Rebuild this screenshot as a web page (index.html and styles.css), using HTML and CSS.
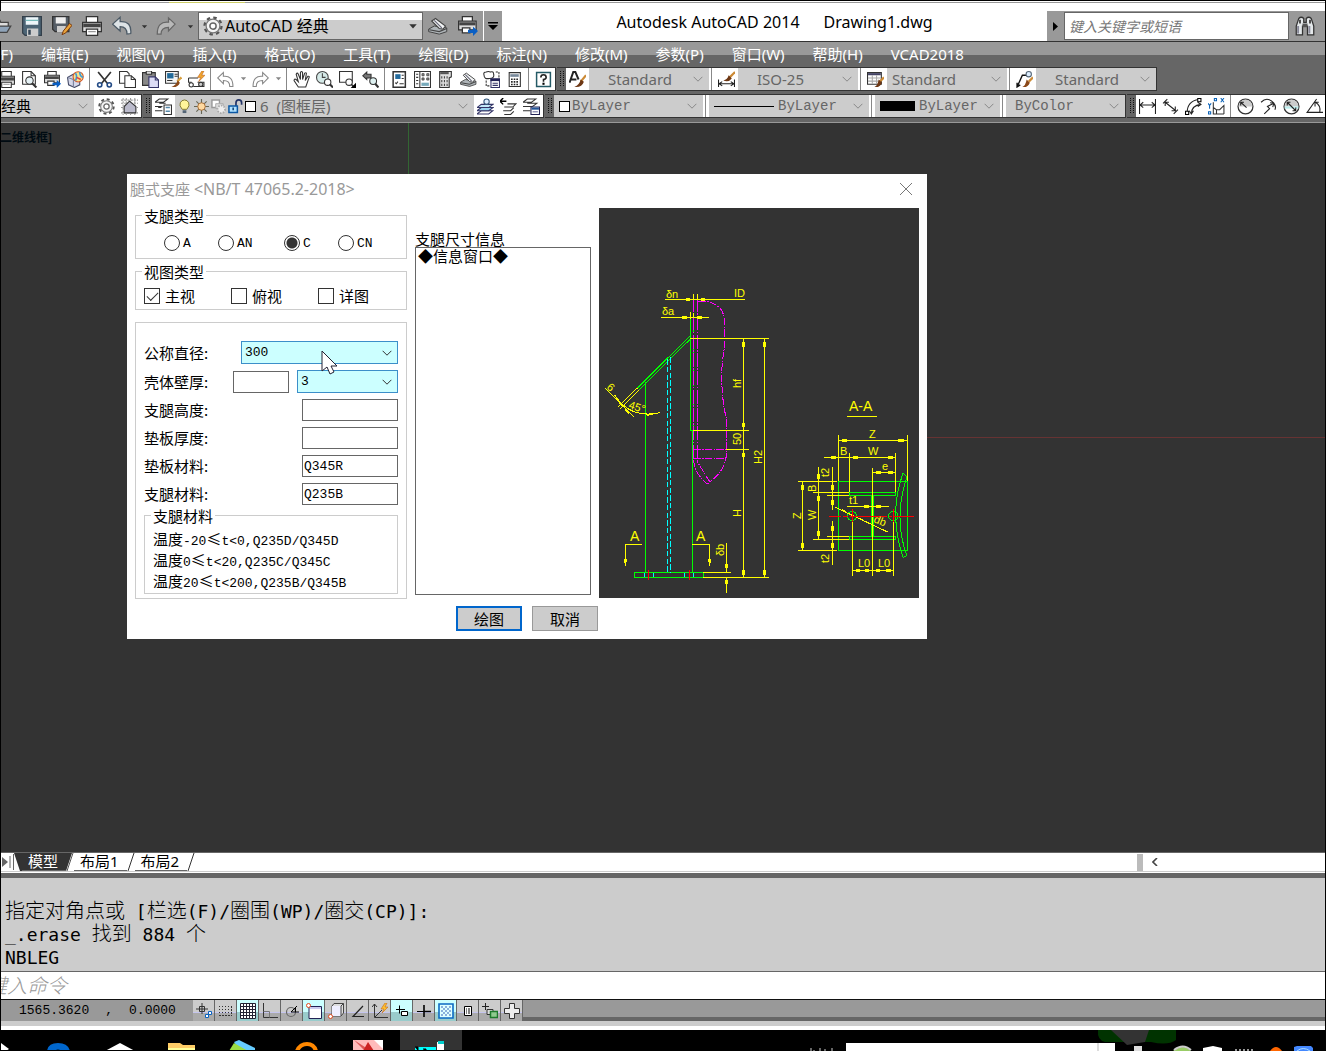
FILE: index.html
```html
<!DOCTYPE html>
<html lang="zh-CN">
<head>
<meta charset="utf-8">
<title>Autodesk AutoCAD 2014 - Drawing1.dwg</title>
<link rel="stylesheet" href="styles.css">
</head>
<body>
<svg class="defs" aria-hidden="true">
  <symbol id="open" viewBox="0 0 16 16"><path d="M1 13V3h5l1 2h6v3" fill="#ddd" stroke="#444"/><path d="M1 13l3-5h11l-3 5z" fill="#8fa3b8" stroke="#444"/></symbol>
  <symbol id="save" viewBox="0 0 16 16"><path d="M.5.5h15v15h-13l-2-2z" fill="#4c6475" stroke="#333f4a"/><path d="M3 1h10v6H3z" fill="#eef6fa"/><path d="M3 3.5h10" stroke="#7bb"/><path d="M4 10h9v6H4z" fill="#ccc"/><path d="M5 11h2v4H5z" fill="#345"/></symbol>
  <symbol id="saveas" viewBox="0 0 16 16"><path d="M.5.5h13v12h-11l-2-2z" fill="#555d66" stroke="#333"/><path d="M3 1h8v5H3z" fill="#eee"/><path d="M4 8h7v5H4z" fill="#ccc"/><path d="M8 15l1-3 5-6 2 1.500-5 6z" fill="#e8a33a" stroke="#7a3c12" stroke-width=".8"/></symbol>
  <symbol id="print" viewBox="0 0 16 16"><path d="M3.500 5V.5h9V5" fill="#fff" stroke="#333"/><path d="M.5 5h15v7.500H.5z" fill="#ddd" stroke="#333"/><path d="M1 6h14v3H1z" fill="#444"/><path d="M3.500 10.500h9v5h-9z" fill="#fff" stroke="#333"/><path d="M5 12.500h6" stroke="#999"/></symbol>
  <symbol id="plot" viewBox="0 0 16 16"><path d="M3.500 4V.5h8V4" fill="#fff" stroke="#333"/><path d="M.5 4h14v7H.5z" fill="#ddd" stroke="#333"/><path d="M1 5h13v2.500H1z" fill="#444"/><path d="M3.500 9.500h6v4h-6z" fill="#fff" stroke="#333"/><path d="M8 11h4V8.500L16 12l-4 4v-2.500H8z" fill="#0a5fc4"/></symbol>
  <symbol id="preview" viewBox="0 0 16 16"><path d="M1.500 12.500V.5h8l4 4v8z" fill="#fff" stroke="#333"/><path d="M9.500.5v4h4" fill="none" stroke="#333"/><circle cx="8" cy="9" r="3.500" fill="#e6f2f6" stroke="#333"/><path d="M10.500 11.500l4 4" stroke="#333" stroke-width="2"/></symbol>
  <symbol id="globe" viewBox="0 0 16 16"><path d="M.5 6L6 3l6 3v7l-5 2.500L1.500 13z" fill="#d5d8ea" stroke="#444a66"/><path d="M6 8v7M.5 6L6 8" stroke="#777d99" fill="none"/><circle cx="10.500" cy="5.500" r="4.800" fill="#fbe48a" stroke="#d0562a"/><path d="M8 2q2 3 0 7M12 1q0 4 3 5" fill="none" stroke="#3a9ad9" stroke-width="1.500"/><path d="M9 6l4 2" stroke="#d44" stroke-width="1.500"/></symbol>
  <symbol id="cut" viewBox="0 0 16 16"><path d="M2 1l9 11M14 1L5 12" stroke="#333" stroke-width="1.600"/><circle cx="3.500" cy="13" r="2" fill="none" stroke="#224a85" stroke-width="1.500"/><circle cx="12.500" cy="13" r="2" fill="none" stroke="#224a85" stroke-width="1.500"/></symbol>
  <symbol id="copy" viewBox="0 0 16 16"><path d="M.5.5h7l2 2v9h-9z" fill="#fff" stroke="#333"/><path d="M5.500 4.500h6l4 3.500v7.500h-10z" fill="#fff" stroke="#333"/><path d="M11.500 4.500V8h4" fill="none" stroke="#333"/></symbol>
  <symbol id="paste" viewBox="0 0 16 16"><path d="M.5 1.500h12v12H.5z" fill="#888" stroke="#333"/><path d="M4 0h5v3H4z" fill="#ddd" stroke="#333"/><path d="M6.500 5.500h6l3 3v7h-9z" fill="#dcdcf5" stroke="#336"/><path d="M12.500 5.500v3h3" fill="none" stroke="#336"/></symbol>
  <symbol id="match" viewBox="0 0 16 16"><path d="M.5.5h12v11H.5z" fill="#f4f4f4" stroke="#333"/><path d="M2 2h6v5H2z" fill="#226a9a"/><path d="M9 3h3M9 5h3M2 9h5" stroke="#333"/><path d="M15.500 6l-4 4" stroke="#d8a040" stroke-width="2"/><path d="M12 9l2 2q-2 5-8 4 4-1 6-6z" fill="#8a4818"/></symbol>
  <symbol id="bedit" viewBox="0 0 16 16"><path d="M.5 6.500h9M.5 6.500v4h3M9 10.500h6v4H5" fill="none" stroke="#333"/><circle cx="3" cy="13" r="2" fill="#fff" stroke="#333"/><circle cx="12" cy="12.500" r="2" fill="#ccc" stroke="#333"/><path d="M13 0L9 6h3l-2 4 6-6h-3l2-4z" fill="#f3a72e" stroke="#b3591b" stroke-width=".5"/></symbol>
  <symbol id="undo" viewBox="0 0 16 16"><path d="M.7 6.500L6 1.500V5q9-1 9 9.500h-3Q12 9 6 9v3z" fill="#fff" stroke="#888"/></symbol>
  <symbol id="undo2" viewBox="0 0 16 16"><path d="M.5 6.500L6.500 1V4.500Q16 4 15 14l-3 .5Q12 8.500 6.500 8.500V12z" fill="#dde3e6" stroke="#4c5a66"/></symbol>
  <symbol id="redo" viewBox="0 0 16 16"><path d="M15.300 6.500L10 1.500V5q-9-1-9 9.500h3Q4 9 10 9v3z" fill="#fff" stroke="#888"/></symbol>
  <symbol id="redo2" viewBox="0 0 16 16"><path d="M15.300 6.500L10 1.500V5q-9-1-9 9.500h3Q4 9 10 9v3z" fill="#b9b9b9" stroke="#666"/></symbol>
  <symbol id="caret" viewBox="0 0 16 16"><path d="M2 5h12l-6 7z"/></symbol>
  <symbol id="pan" viewBox="0 0 16 16"><path d="M5 15L1 9q0-2 2-1l2 2L3 3q1-2 2 0l2 5V1.500q1-2 2 0V8l2-6q2-1 1.500 1L11.500 9 14 5q2-.5 1 1.500L12 15z" fill="#fff" stroke="#333"/></symbol>
  <symbol id="zoom" viewBox="0 0 16 16"><circle cx="6" cy="6" r="5.500" fill="#d5eae8" stroke="#444"/><path d="M6 2v4h3" fill="none" stroke="#444"/><circle cx="11" cy="10.500" r="3" fill="#fff" stroke="#333"/><path d="M13 12.500l3 3" stroke="#333" stroke-width="2"/></symbol>
  <symbol id="zoomwin" viewBox="0 0 16 16"><path d="M.5.5h12v10H.5z" fill="#fff" stroke="#333"/><circle cx="9.500" cy="10.500" r="3" fill="#fff" stroke="#333"/><path d="M11.500 12.500l2 2" stroke="#333" stroke-width="1.500"/><path d="M16 11v5h-5z" fill="#000"/></symbol>
  <symbol id="zoomprev" viewBox="0 0 16 16"><path d="M.7 4.500L4.500 1v2h4v3.500h-4V8z" fill="#777" stroke="#333"/><circle cx="10.500" cy="9.500" r="3.200" fill="#dff2f2" stroke="#333"/><path d="M12.500 12l3 3.500" stroke="#333" stroke-width="2"/></symbol>
  <symbol id="props" viewBox="0 0 16 16"><path d="M2 .7h11.500v14.600H2z" fill="#fff" stroke="#333" stroke-width="1.400"/><path d="M4 3h5v4.500H4z" fill="#236a9c"/><path d="M10 4h2M10 7h2M8 12h4M4 11l1 1 1.500-2" stroke="#333" fill="none"/></symbol>
  <symbol id="design" viewBox="0 0 16 16"><path d="M.5.5h15v15H.5z" fill="#fff" stroke="#333"/><path d="M5.500 1v15M2 3h2M2 6h2M2 9h2M2 12h2" stroke="#333"/><path d="M7.500 2.500h2v2h-2zM12 2.500h2v2h-2zM7.500 6.500h2v2h-2zM12 6.500h2v2h-2z" fill="#999" stroke="#333" stroke-width=".7"/><path d="M7 11h7v3H7z" fill="#7ab"/></symbol>
  <symbol id="palette" viewBox="0 0 16 16"><path d="M2.500.5h11v5l-2 1v9h-9z" fill="#ddd" stroke="#333"/><path d="M3 2h8" stroke="#555" stroke-width="2"/><path d="M4.500 5v9M7 5v9M9.500 5v9" stroke="#444" stroke-dasharray="2 1.500"/></symbol>
  <symbol id="sheet" viewBox="0 0 16 16"><path d="M.5 10.500L5 8l10 1.500v3L9 14.500l-8.500-2z" fill="#aeb4b8" stroke="#444" stroke-width=".8"/><path d="M1 11l8 1.500 6-2.500" fill="none" stroke="#444"/><path d="M3 4l3-2 8 6-2 2.500-3-.5z" fill="#f2f4f5" stroke="#444" stroke-width=".9"/><path d="M5 3.500l6 6" stroke="#667"/></symbol>
  <symbol id="markup" viewBox="0 0 16 16"><path d="M1 4q-1-3 2-3 2-1 4 0 3-1 3 2 1 4-4 4-5 1-5-3z" fill="#fff" stroke="#333"/><path d="M12 1h3v5M3 9v5h3" fill="none" stroke="#333" stroke-dasharray="2 1"/><path d="M7.500 7.500h8v8h-8z" fill="#fff" stroke="#336"/><path d="M7 7h9v2.500H7z" fill="#225"/><path d="M9 11.500h5M9 13.500h5" stroke="#336"/></symbol>
  <symbol id="calc" viewBox="0 0 16 16"><path d="M3 1.500h10.500v13H3z" fill="#fff" stroke="#333"/><path d="M4 3h8v2.500H4z" fill="#789"/><path d="M5.500 7v7M8 7v7M10.500 7v7" stroke="#222" stroke-width="1.500" stroke-dasharray="1.500 1"/></symbol>
  <symbol id="help" viewBox="0 0 16 16"><path d="M1.500 1.500h13v13h-13z" fill="#fff" stroke="#245a66" stroke-width="1.400"/><path d="M5.500 6q0-2.500 2.500-2.500T10.500 6Q10.500 7.500 8 8v2" fill="none" stroke="#222" stroke-width="1.500"/><path d="M7 11h2v2H7z"/></symbol>
  <symbol id="textstyle" viewBox="0 0 16 16"><path d="M.5 11L4 1h2l3 7M2 8h5" fill="none" stroke="#222" stroke-width="1.800"/><path d="M16 4l-5 6" stroke="#cc8a35" stroke-width="2"/><path d="M11 8l3 2q-2 6-9 5 5-2 6-7z" fill="#6d3714"/></symbol>
  <symbol id="dimstyle" viewBox="0 0 16 16"><path d="M.5 8v7M15.500 8v7M1 12h14M4 10l-3 2 3 2M12 10l3 2-3 2" fill="none" stroke="#222"/><path d="M16 1l-5 5" stroke="#cc8a35" stroke-width="2"/><path d="M10 4l3 3q-3 4-8 2 4-1 5-5z" fill="#6d3714"/></symbol>
  <symbol id="tablestyle" viewBox="0 0 16 16"><path d="M.5 1.500h13v11H.5z" fill="#fff" stroke="#333"/><path d="M1 3h12" stroke="#446" stroke-width="2"/><path d="M1 6.500h12M1 9.500h12M5 4v8M9 4v8" stroke="#aaa"/><path d="M16 6l-4 4" stroke="#cc8a35" stroke-width="2"/><path d="M11 8l3 3q-2 5-7 4 3-1 4-7z" fill="#6d3714"/></symbol>
  <symbol id="leader" viewBox="0 0 16 16"><path d="M1 15L6 4h4M1 11v4l3-2" fill="none" stroke="#111" stroke-width="1.300"/><circle cx="12" cy="3" r="2.500" fill="#def" stroke="#567"/><path d="M16 6l-4 4" stroke="#cc8a35" stroke-width="2"/><path d="M10 8l3 3q-2 5-7 4 3-1 4-7z" fill="#8a4818"/></symbol>
  <symbol id="gear" viewBox="0 0 16 16"><circle cx="8" cy="8" r="6.800" fill="none" stroke="#555" stroke-width="1.800" stroke-dasharray="2.800 2.540"/><circle cx="8" cy="8" r="5.500" fill="#f4f4f4" stroke="#777"/><circle cx="8" cy="8" r="2.500" fill="#fff" stroke="#666" stroke-width="1.200"/></symbol>
  <symbol id="home" viewBox="0 0 16 16"><path d="M2 0v16M5 0v16M9 0v16M13 0v16M0 2h16M0 5h16M0 9h16M0 14h16" stroke="#999" stroke-dasharray="2 1"/><path d="M3 8l5-5 6 5v6H3z" fill="#bbc" stroke="#333"/></symbol>
  <symbol id="layerprop" viewBox="0 0 16 16"><path d="M4 1h8L8 4H0zM4 5h6M0 8h7M3 9h3M0 12h7" fill="none" stroke="#333"/><path d="M8.500 6.500h7v9h-7z" fill="#fff" stroke="#333"/><path d="M10 9h4M10 12.500h4" stroke="#58a" stroke-width="1.500"/></symbol>
  <symbol id="bulb" viewBox="0 0 16 16"><path d="M5.500 11Q2 7 3.500 4q1.500-3 4.500-3t4.500 3q1.500 3-2 7z" fill="#fff59a" stroke="#7d742c"/><path d="M6 12h4v3H6z" fill="#567"/></symbol>
  <symbol id="sun" viewBox="0 0 16 16"><path d="M8 0v16M0 8h16M2.500 2.500l11 11M13.500 2.500l-11 11" stroke="#665" stroke-width="1.200"/><circle cx="8" cy="8" r="4" fill="#ffd9a0" stroke="#a86b33"/></symbol>
  <symbol id="vpfreeze" viewBox="0 0 16 16"><path d="M1 1h8v8H1z" fill="#fff" stroke="#999" stroke-width="1.500"/><path d="M5 5h8v5H5z" fill="#ddd" stroke="#aaa"/><circle cx="11" cy="11" r="4" fill="#eee" stroke="#aaa" stroke-dasharray="1.500 1.500" stroke-width="2"/></symbol>
  <symbol id="lock" viewBox="0 0 16 16"><path d="M8.500 8V4q0-3 3-3t3 3v2" fill="none" stroke="#236" stroke-width="1.800"/><path d="M1 7.500h9v7H1z" fill="#aee0ff" stroke="#0b57a4" stroke-width="1.600"/><path d="M5.500 9v3" stroke="#036" stroke-width="1.500"/></symbol>
  <symbol id="laycur" viewBox="0 0 16 16"><path d="M4 12h11l-4 3H0z" fill="#fff" stroke="#336"/><path d="M4 9h11l-4 3H0z" fill="#9ad4f0" stroke="#336"/><path d="M4 6h11l-4 3H0z" fill="#c4e8f8" stroke="#336"/><circle cx="9" cy="3.500" r="2.500" fill="#def" stroke="#357"/></symbol>
  <symbol id="layprev" viewBox="0 0 16 16"><path d="M7 5.500h8l-3 3H4M13 9l-3 3H3M13 12.500l-3 3H4" fill="none" stroke="#333"/><path d="M0 3h6M3 0L0 3l3 3" fill="none" stroke="#000" stroke-width="1.300"/></symbol>
  <symbol id="laystate" viewBox="0 0 16 16"><path d="M4 1h8L8 4H0zM4 5h9L9 8H0M0 12h7" fill="none" stroke="#333"/><path d="M7.500 8.500h8v7h-8z" fill="#fff" stroke="#225"/><path d="M8 9h7v2H8z" fill="#259"/><path d="M9 13h5" stroke="#669"/></symbol>
  <symbol id="dlinear" viewBox="0 0 16 16"><path d="M.5 1v14M15.500 1v14M1 6.500h14M4 4L1 6.500 4 9M12 4l3 2.500L12 9" fill="none" stroke="#222"/></symbol>
  <symbol id="daligned" viewBox="0 0 16 16"><path d="M1 5l4-4M11 15l4-4M3 4l10 8M3 7.500V4h3.500M12.500 8v4H9" fill="none" stroke="#222"/></symbol>
  <symbol id="darc" viewBox="0 0 16 16"><path d="M2 14Q2 3 13 1.500M6 15q0-8 9-9M4 12l2 3 2-3M12 4l3 2-3 2" fill="none" stroke="#222"/><path d="M.5 12.500h3v3h-3zM12 .5h3v3h-3z" fill="#fff" stroke="#000"/></symbol>
  <symbol id="dord" viewBox="0 0 16 16"><path d="M5 4v11h10M5 9l3 2v4M8 11h3l4-4v8" fill="none" stroke="#333"/><path d="M0 5l1.500 2L3 5M1.500 7v3M12 0l3 4M15 0l-3 4M6 .5h2v2H6zM.5 13h2v2h-2z" fill="none" stroke="#0a62b8"/></symbol>
  <symbol id="dradius" viewBox="0 0 16 16"><circle cx="8" cy="8" r="7" fill="#fff" stroke="#333" stroke-width="1.200"/><path d="M1.500 8a6.500 6.500 0 0 1 13 0z" fill="#ccc"/><path d="M3.500 4L9 9M3.500 7V4h3" fill="none" stroke="#222"/></symbol>
  <symbol id="djog" viewBox="0 0 16 16"><path d="M1 4q5-5 10-1 5 4 3 8M4 15l5-5-2-2 6-3M9.500 4.500l3.500.5-1 3.500" fill="none" stroke="#222"/></symbol>
  <symbol id="ddia" viewBox="0 0 16 16"><circle cx="8" cy="8" r="7" fill="#fff" stroke="#333" stroke-width="1.200"/><path d="M1.500 8a6.500 6.500 0 0 1 13 0z" fill="#ccc"/><path d="M1.500 8h13v2h-13z" fill="#bee"/><path d="M4 4l8 8M4 7V4h3M12 9v3H9" fill="none" stroke="#222"/></symbol>
  <symbol id="dang" viewBox="0 0 16 16"><path d="M10 1L1 13.500h15M9 4q5 3 4 9M8.500 8V4H12" fill="none" stroke="#222"/></symbol>
  <symbol id="bino" viewBox="0 0 16 16"><path d="M1 15V8l2-6q2-2 4 0v3h2V2q2-2 4 0l2 6v7h-5V8H6v7z" fill="#e4e8ea" stroke="#333"/><path d="M2.500 8v6M11.500 8v6" stroke="#889" stroke-width="1.500"/><path d="M4 3v3M12 3v3" stroke="#444" stroke-width="1.500"/><path d="M6 6h4v3H6z" fill="#555"/></symbol>
  <symbol id="chev" viewBox="0 0 16 16"><path d="M1 4.500l7 7 7-7" fill="none" stroke="currentColor" stroke-width="1.600"/></symbol>
  <symbol id="infer" viewBox="0 0 16 16"><path d="M6 0v11M0 6h12" stroke="#333"/><path d="M3.500 3.500h5v5h-5z" fill="none" stroke="#333"/><path d="M9.500 11.500h3v3h-3zM12.500 8.500h3v3h-3z" fill="#fff" stroke="#0b63c0"/></symbol>
  <symbol id="snap" viewBox="0 0 16 16"><path d="M1 3.500h11M1 6.500h11M1 9.500h11" stroke="#333" stroke-dasharray="1 2"/><path d="M13.500 3v10M1 12.500h13" stroke="#333" stroke-dasharray="2 1"/></symbol>
  <symbol id="grid" viewBox="0 0 16 16"><path d="M.5.5h15v15H.5z" fill="#fff" stroke="#223"/><path d="M3.500 0v16M6.500 0v16M9.500 0v16M12.500 0v16M0 3.500h16M0 6.500h16M0 9.500h16M0 12.500h16" stroke="#223"/></symbol>
  <symbol id="ortho" viewBox="0 0 16 16"><path d="M1.500 0v14.500H16" fill="none" stroke="#333"/><path d="M1.500 8.500h6v6" fill="none" stroke="#777"/></symbol>
  <symbol id="polar" viewBox="0 0 16 16"><circle cx="7" cy="9" r="4.500" fill="none" stroke="#666" stroke-width="1.200"/><path d="M13 3L7 9h8M11.500 4v5" fill="none" stroke="#000"/></symbol>
  <symbol id="osnap" viewBox="0 0 16 16"><path d="M3 3.500h12.500v12H3z" fill="#fff" stroke="#225"/><path d="M4 4h11v2H4z" fill="#cce"/><circle cx="2.500" cy="2.500" r="2" fill="#fff" stroke="#e0491c"/></symbol>
  <symbol id="osnap3" viewBox="0 0 16 16"><path d="M4 3l2-2.500h9.500V10L13 13H4z" fill="#ddd" stroke="#444"/><path d="M4 3h9v10H4z" fill="#eef"/><path d="M13 3l2.500-2.500M13 3v10" stroke="#444"/><circle cx="2.500" cy="13.500" r="2" fill="#fff" stroke="#e0491c"/></symbol>
  <symbol id="otrack" viewBox="0 0 16 16"><path d="M13 3L3 13.500h11" fill="none" stroke="#222" stroke-width="1.200"/></symbol>
  <symbol id="ducs" viewBox="0 0 16 16"><path d="M2.500 1v13.500H16M0 4l2.500-3L5 4M3 14l7-7" fill="none" stroke="#333"/><path d="M13 0L9 6h3l-2 4 6-6h-3l2-4z" fill="#ffc02e" stroke="#c4691b" stroke-width=".6"/></symbol>
  <symbol id="dyn" viewBox="0 0 16 16"><path d="M2 6.500h9M5.500 2.500v8" stroke="#000"/><path d="M7.500 8.500h6v4h-6z" fill="#fff" stroke="#000"/></symbol>
  <symbol id="lwt" viewBox="0 0 16 16"><path d="M1 8.500h14" stroke="#000"/><path d="M8 2v12M8 8.500h7" stroke="#000" stroke-width="1.600"/></symbol>
  <symbol id="tpy" viewBox="0 0 16 16"><path d="M1 1h14v14H1z" fill="#dff" stroke="#0b6ac4" stroke-width="1.600"/><path d="M3 4h10M3 8h10M3 12h10" stroke="#8ab0dc" stroke-width="2" stroke-dasharray="2 2"/><path d="M5 6h8M5 10h8" stroke="#8ab0dc" stroke-width="2" stroke-dasharray="2 2"/></symbol>
  <symbol id="qp" viewBox="0 0 16 16"><path d="M4.500 3.500h7v9h-7z" fill="#fff" stroke="#000"/><path d="M6 6h1M6 8h1M6 10h1M8 6h2M8 8h2M8 10h2" stroke="#000"/></symbol>
  <symbol id="sc" viewBox="0 0 16 16"><path d="M3.500 0v7M0 3.500h7" stroke="#222"/><path d="M5 6.500h6v5H5z" fill="#ddd" stroke="#333"/><path d="M8.500 8.500h7v6h-7z" fill="#8fca8f" stroke="#1d7a2c" stroke-width="1.500"/></symbol>
  <symbol id="am" viewBox="0 0 16 16"><path d="M5.500.5h5v5h5v5h-5v5h-5v-5h-5v-5h5z" fill="#eee" stroke="#333"/></symbol>
</svg>

<div class="app">
  <header class="titlebar">
    <div class="quick">
      <button class="q" aria-label="打开"><svg><use href="#open"/></svg></button>
      <button class="q" aria-label="保存"><svg><use href="#save"/></svg></button>
      <button class="q" aria-label="另存为"><svg><use href="#saveas"/></svg></button>
      <button class="q" aria-label="打印"><svg><use href="#print"/></svg></button>
      <button class="q" aria-label="放弃"><svg><use href="#undo2"/></svg></button>
      <button class="drop" aria-label="放弃列表"><svg><use href="#caret"/></svg></button>
      <button class="q" aria-label="重做"><svg><use href="#redo2"/></svg></button>
      <button class="drop last" aria-label="重做列表"><svg><use href="#caret"/></svg></button>
      <div class="workspace">
        <svg class="gear"><use href="#gear"/></svg>
        <select aria-label="工作空间"><option>AutoCAD 经典</option></select>
        <svg class="arrow"><use href="#caret"/></svg>
      </div>
      <button class="q" aria-label="图纸集"><svg><use href="#sheet"/></svg></button>
      <button class="q" aria-label="绘图"><svg><use href="#plot"/></svg></button>
      <button class="more" aria-label="自定义"><svg viewBox="0 0 10 8"><path d="M0 0h10v1.500H0zM0 3h10L5 8z"/></svg></button>
    </div>
    <h1><span>Autodesk AutoCAD 2014</span><span>Drawing1.dwg</span></h1>
    <div class="search">
      <svg class="tri" viewBox="0 0 5 9"><path d="M0 0l5 4.500L0 9z"/></svg>
      <input type="text" placeholder="键入关键字或短语" aria-label="搜索">
      <button class="find" aria-label="查找"><svg><use href="#bino"/></svg></button>
    </div>
  </header>

  <nav class="menu">
    <a href="#">(F)</a><a href="#">编辑(E)</a><a href="#">视图(V)</a><a href="#">插入(I)</a><a href="#">格式(O)</a><a href="#">工具(T)</a><a href="#">绘图(D)</a><a href="#">标注(N)</a><a href="#">修改(M)</a><a href="#">参数(P)</a><a href="#">窗口(W)</a><a href="#">帮助(H)</a><a href="#">VCAD2018</a>
  </nav>

  <div class="tools">
    <div class="bar cut">
      <button class="t" aria-label="打印"><svg><use href="#print"/></svg></button>
      <button class="t" aria-label="打印预览"><svg><use href="#preview"/></svg></button>
      <button class="t" aria-label="发布"><svg><use href="#plot"/></svg></button>
      <button class="t" aria-label="三维打印"><svg><use href="#globe"/></svg></button>
      <i class="sep"></i>
      <button class="t" aria-label="剪切"><svg><use href="#cut"/></svg></button>
      <button class="t" aria-label="复制"><svg><use href="#copy"/></svg></button>
      <button class="t" aria-label="粘贴"><svg><use href="#paste"/></svg></button>
      <button class="t" aria-label="特性匹配"><svg><use href="#match"/></svg></button>
      <button class="t" aria-label="块编辑器"><svg><use href="#bedit"/></svg></button>
      <i class="sep"></i>
      <button class="t" aria-label="放弃"><svg><use href="#undo"/></svg></button>
      <button class="drop pale" aria-label="放弃列表"><svg><use href="#caret"/></svg></button>
      <button class="t" aria-label="重做"><svg><use href="#redo"/></svg></button>
      <button class="drop pale" aria-label="重做列表"><svg><use href="#caret"/></svg></button>
      <i class="sep"></i>
      <button class="t" aria-label="平移"><svg><use href="#pan"/></svg></button>
      <button class="t" aria-label="实时缩放"><svg><use href="#zoom"/></svg></button>
      <button class="t" aria-label="窗口缩放"><svg><use href="#zoomwin"/></svg></button>
      <button class="t" aria-label="缩放上一个"><svg><use href="#zoomprev"/></svg></button>
      <i class="sep"></i>
      <button class="t" aria-label="特性"><svg><use href="#props"/></svg></button>
      <button class="t" aria-label="设计中心"><svg><use href="#design"/></svg></button>
      <button class="t" aria-label="工具选项板"><svg><use href="#palette"/></svg></button>
      <button class="t" aria-label="图纸集管理器"><svg><use href="#sheet"/></svg></button>
      <button class="t" aria-label="标记集"><svg><use href="#markup"/></svg></button>
      <button class="t" aria-label="计算器"><svg><use href="#calc"/></svg></button>
      <i class="sep"></i>
      <button class="t" aria-label="帮助"><svg><use href="#help"/></svg></button>
    </div>
    <div class="bar">
      <i class="grip"></i>
      <button class="t" aria-label="文字样式"><svg><use href="#textstyle"/></svg></button>
      <div class="combo w120 in"><select aria-label="文字样式"><option>Standard</option></select><svg class="chev"><use href="#chev"/></svg></div>
      <i class="sep"></i>
      <button class="t" aria-label="标注样式"><svg><use href="#dimstyle"/></svg></button>
      <div class="combo w120 in"><select aria-label="标注样式"><option>ISO-25</option></select><svg class="chev"><use href="#chev"/></svg></div>
      <i class="sep"></i>
      <button class="t" aria-label="表格样式"><svg><use href="#tablestyle"/></svg></button>
      <div class="combo w120"><select aria-label="表格样式"><option>Standard</option></select><svg class="chev"><use href="#chev"/></svg></div>
      <i class="sep"></i>
      <button class="t" aria-label="多重引线样式"><svg><use href="#leader"/></svg></button>
      <div class="combo w120 in"><select aria-label="多重引线样式"><option>Standard</option></select><svg class="chev"><use href="#chev"/></svg></div>
    </div>
  </div>

  <div class="tools second">
    <div class="bar">
      <div class="combo ws"><select aria-label="工作空间"><option>经典</option></select><svg class="chev"><use href="#chev"/></svg></div>
      <button class="t" aria-label="工作空间设置"><svg><use href="#gear"/></svg></button>
      <button class="t" aria-label="我的工作空间"><svg><use href="#home"/></svg></button>
    </div>
    <div class="bar">
      <i class="grip"></i>
      <button class="t" aria-label="图层特性"><svg><use href="#layerprop"/></svg></button>
      <div class="combo layer">
        <svg class="li"><use href="#bulb"/></svg><svg class="li"><use href="#sun"/></svg><svg class="li"><use href="#vpfreeze"/></svg><svg class="li"><use href="#lock"/></svg><i class="swatch"></i>
        <select aria-label="图层"><option>6&nbsp; (图框层)</option></select><svg class="chev"><use href="#chev"/></svg></div>
      <button class="t" aria-label="置为当前"><svg><use href="#laycur"/></svg></button>
      <button class="t" aria-label="上一个图层"><svg><use href="#layprev"/></svg></button>
      <button class="t" aria-label="图层状态"><svg><use href="#laystate"/></svg></button>
    </div>
    <div class="bar mono">
      <i class="grip"></i>
      <div class="combo color"><i class="swatch"></i><select aria-label="颜色"><option>ByLayer</option></select><svg class="chev"><use href="#chev"/></svg></div>
      <i class="sep"></i>
      <div class="combo ltype"><i class="line"></i><select aria-label="线型"><option>ByLayer</option></select><svg class="chev"><use href="#chev"/></svg></div>
      <i class="sep"></i>
      <div class="combo lwt"><i class="block"></i><select aria-label="线宽"><option>ByLayer</option></select><svg class="chev"><use href="#chev"/></svg></div>
      <i class="sep"></i>
      <div class="combo plot"><select aria-label="打印样式"><option>ByColor</option></select><svg class="chev"><use href="#chev"/></svg></div>
    </div>
    <div class="bar rest">
      <i class="grip"></i>
      <button class="t" aria-label="线性"><svg><use href="#dlinear"/></svg></button>
      <button class="t" aria-label="对齐"><svg><use href="#daligned"/></svg></button>
      <button class="t" aria-label="弧长"><svg><use href="#darc"/></svg></button>
      <button class="t" aria-label="坐标"><svg><use href="#dord"/></svg></button>
      <i class="sep"></i>
      <button class="t" aria-label="半径"><svg><use href="#dradius"/></svg></button>
      <button class="t" aria-label="折弯"><svg><use href="#djog"/></svg></button>
      <button class="t" aria-label="直径"><svg><use href="#ddia"/></svg></button>
      <button class="t" aria-label="角度"><svg><use href="#dang"/></svg></button>
    </div>
  </div>

  <main class="canvas">
    <span class="vstyle">二维线框]</span>
    <i class="axis-y"></i><i class="axis-x"></i>

    <form class="dialog" role="dialog" aria-labelledby="dlg">
      <div class="dhead"><h2 id="dlg">腿式支座 <span>&lt;NB/T 47065.2-2018&gt;</span></h2><button type="button" class="close" aria-label="关闭"><svg viewBox="0 0 14 14"><path d="M1 1l12 12M13 1L1 13" stroke="#777" fill="none"/></svg></button></div>
      <div class="dbody">
        <div class="left">
          <fieldset><legend>支腿类型</legend>
            <div class="types">
              <label><input type="radio" name="type"><span class="m">A</span></label>
              <label><input type="radio" name="type"><span class="m">AN</span></label>
              <label><input type="radio" name="type" checked><span class="m">C</span></label>
              <label><input type="radio" name="type"><span class="m">CN</span></label>
            </div>
          </fieldset>
          <fieldset><legend>视图类型</legend>
            <div class="views">
              <label><input type="checkbox" checked>主视</label>
              <label><input type="checkbox">俯视</label>
              <label><input type="checkbox">详图</label>
            </div>
          </fieldset>
          <div class="params">
            <div class="row"><label for="dn">公称直径:</label><div class="pick wide"><select id="dn"><option>300</option></select><svg class="chev"><use href="#chev"/></svg></div></div>
            <div class="row"><label for="th">壳体壁厚:</label><input id="th" type="text" class="short"><div class="pick"><select aria-label="壁厚"><option>3</option></select><svg class="chev"><use href="#chev"/></svg></div></div>
            <div class="row"><label for="h">支腿高度:</label><input id="h" type="text"></div>
            <div class="row"><label for="pt">垫板厚度:</label><input id="pt" type="text"></div>
            <div class="row"><label for="pm">垫板材料:</label><input id="pm" type="text" value="Q345R"></div>
            <div class="row"><label for="lm">支腿材料:</label><input id="lm" type="text" value="Q235B"></div>
            <fieldset class="notes"><legend>支腿材料</legend>
              <div class="lines">
                <p>温度<span class="m">-20</span>≤<span class="m">t&lt;0,Q235D/Q345D</span></p>
                <p>温度<span class="m">0</span>≤<span class="m">t&lt;20,Q235C/Q345C</span></p>
                <p>温度<span class="m">20</span>≤<span class="m">t&lt;200,Q235B/Q345B</span></p>
              </div>
            </fieldset>
          </div>
        </div>
        <div class="middle">
          <label for="info">支腿尺寸信息</label>
          <textarea id="info" readonly>◆信息窗口◆</textarea>
        </div>
        <svg class="preview" viewBox="599 208 320 390" role="img" aria-label="腿式支座图样">
          <svg x="599" y="270" width="190" height="330" viewBox="0 0 570 990" fill="none" stroke-width="3">
            <g stroke="#0f0"><path d="M274 148v334h9M280 482v426M139 337v571M106 907h208v15H106z"/><path d="M283 170v310" stroke-dasharray="18 14"/><path d="M273 198L115 354M273 208L121 359"/></g>
            <g stroke="#0ff"><path d="M206 268v640M214 262v646" stroke-dasharray="16 7"/><path d="M137 908v14M163 908v14M256 908v14M283 908v14"/></g>
            <path stroke="#f00" d="M148 900v29M271 900v29"/>
            <g stroke="#f0f"><path d="M283 84v485M295 84v492" stroke-dasharray="42 4 5 4"/><path d="M298 93q77 0 78 60v80q-9 60-8 90 2 80 14 120v95q4 60-50 97l-36-58M284 570q2 40 41 72l12-8M284 538h98M284 565h96" stroke-dasharray="22 4 4 4"/></g>
            <g stroke="#ff0">
              <path d="M198 88h240M283 72v14M295 72v14M186 142h144M274 126v22M283 130v14"/>
              <path d="M262 85h10v6h-10zM307 85h10v6h-10zM251 139h11v6h-11zM296 139h11v6h-11z"/>
              <path d="M274 205h236M283 481h167M382 538h68M313 907h83M313 922h197M433 207v715M496 207v715M382 819v88M382 922v46"/>
              <path d="M430 218h6v10h-6zM430 459h6v10h-6zM430 549h6v10h-6zM430 902h6v10h-6zM493 218h6v10h-6zM493 902h6v10h-6zM379 883h6v10h-6zM379 931h6v10h-6z"/>
              <path d="M115 354L56 412M121 359L62 418M18 354l86 86"/>
              <path d="M46 374q48 74 136 54M60 398l14 13M78 418l12 12M145 436l20-5"/>
              <path d="M129 823H79v66M76 868h7l-4 16zM280 823h52v66M328 868h7l-3 16z"/>
            </g>
          </svg>
          <svg x="780" y="390" width="150" height="200" viewBox="0 0 450 600" fill="none" stroke-width="3">
            <g stroke="#0f0"><path d="M175 274h207v207H175zM208 307h139v10H208zM208 439h139v9H208zM275 317v122M280 317v122"/><path d="M369 250q-44 120 0 252l12-5q-42-110 0-237zM202 378a14 14 0 1 0 28 0a14 14 0 1 0-28 0zM326 378a14 14 0 1 0 28 0a14 14 0 1 0-28 0z"/></g>
            <g stroke="#ff0">
              <path d="M201 79h90M175 135v139M382 135v139M175 152h207M132 202h215M208 190v117M347 190v117M277 234v220M277 247h70"/>
              <path d="M186 149h13v6h-13zM356 149h13v6h-13zM153 199h12v6h-12zM220 199h12v6h-12zM324 199h12v6h-12zM289 244h12v6h-12zM324 244h12v6h-12z"/>
              <path d="M54 274h117M54 481h117M67 274v207M100 307h108M142 317h66M142 439h66M100 448h108M116 231v217M157 231v130M157 392v132"/>
              <path d="M64 287h6v12h-6zM64 459h6v12h-6zM113 254h6v12h-6zM113 320h6v12h-6zM113 425h6v12h-6zM154 287h6v12h-6zM154 330h6v12h-6zM154 409h6v12h-6zM154 460h6v12h-6z"/>
              <path d="M201 349h125M166 352l157 74M254 346h12v6h-12zM289 346h12v6h-12zM217 395v163M340 395v163M277 448v110M217 541h123"/>
              <path d="M228 538h10v6h-10zM256 538h10v6h-10zM288 538h10v6h-10zM320 538h10v6h-10zM185 358l14 8M238 384l14 8"/>
            </g>
            <path stroke="#f00" d="M148 380h36M190 380h14M210 380h110M326 380h10M342 380h60M217 356v40M340 356v40"/>
          </svg>
          <g class="dim">
            <text x="666" y="298">δn</text><text x="734" y="297">ID</text><text x="662" y="315">δa</text>
            <text x="606" y="388" transform="rotate(42 606 388)">6</text><text x="628" y="408" transform="rotate(18 628 408)">45°</text>
            <text x="741" y="388" transform="rotate(-90 741 388)">hf</text><text x="741" y="445" transform="rotate(-90 741 445)">50</text>
            <text x="762" y="464" transform="rotate(-90 762 464)">H2</text><text x="741" y="517" transform="rotate(-90 741 517)">H</text>
            <text x="724" y="556" transform="rotate(-90 724 556)">δb</text>
            <text x="869" y="438">Z</text><text x="840" y="455">B</text><text x="868" y="455">W</text><text x="882" y="470">e</text>
            <text x="829" y="477" transform="rotate(-90 829 477)">t2</text><text x="816" y="492" transform="rotate(-90 816 492)">B</text>
            <text x="801" y="519" transform="rotate(-90 801 519)">Z</text><text x="816" y="520" transform="rotate(-90 816 520)">W</text>
            <text x="829" y="563" transform="rotate(-90 829 563)">t2</text><text x="849" y="504">t1</text>
            <text x="873" y="522" transform="rotate(22 873 522)">db</text><text x="858" y="567">L0</text><text x="878" y="567">L0</text>
          </g>
          <g class="dim big"><text x="630" y="541">A</text><text x="696" y="541">A</text><text x="849" y="411">A-A</text></g>
        </svg>
      </div>
      <div class="dfoot"><button type="button" class="primary">绘图</button><button type="button">取消</button></div>
    </form>
    <svg class="cursor" viewBox="0 0 16 26"><path d="M1 1v20l5-4 3 7 4-2-3-6h6z" fill="#fff" stroke="#223"/></svg>
  </main>

  <div class="tabs">
    <button class="nav" aria-label="最后"><svg viewBox="0 0 14 16"><path d="M1 3l6 5-6 5z" fill="#666"/><path d="M9 2v12M12.500 0v16" stroke="#666" fill="none"/></svg></button>
    <svg class="slant first" viewBox="0 0 8 18"><path d="M0 0h8v18H6z" fill="#333"/></svg>
    <button class="tab on">模型</button>
    <svg class="slant" viewBox="0 0 8 18"><path d="M0 0h6L0 18z" fill="#333"/><path d="M7 0L1 18" stroke="#555"/></svg>
    <button class="tab">布局1</button>
    <svg class="slant" viewBox="0 0 8 18"><path d="M7 0L1 18" stroke="#333"/></svg>
    <button class="tab">布局2</button>
    <svg class="slant" viewBox="0 0 8 18"><path d="M7 0L1 18" stroke="#333"/></svg>
    <div class="hscroll"><i class="thumb"></i><svg viewBox="0 0 6 8"><path d="M5 0L1 4l4 4" fill="none" stroke="#444" stroke-width="1.600"/></svg></div>
  </div>

  <section class="console">
    <p><b>指定对角点或</b> [<b>栏选</b>(F)/<b>圈围</b>(WP)/<b>圈交</b>(CP)]:</p>
    <p>_.erase <b>找到</b> 884 <b>个</b></p>
    <p>NBLEG</p>
  </section>
  <div class="prompt"><input type="text" placeholder="键入命令" aria-label="命令行"></div>

  <footer class="status">
    <output><span>1565.3620</span><span>,</span><span>0.0000</span></output>
    <button class="s" aria-label="推断约束"><svg><use href="#infer"/></svg></button>
    <button class="s" aria-label="捕捉"><svg><use href="#snap"/></svg></button>
    <button class="s on" aria-label="栅格"><svg><use href="#grid"/></svg></button>
    <button class="s" aria-label="正交"><svg><use href="#ortho"/></svg></button>
    <button class="s" aria-label="极轴"><svg><use href="#polar"/></svg></button>
    <button class="s on" aria-label="对象捕捉"><svg><use href="#osnap"/></svg></button>
    <button class="s" aria-label="三维对象捕捉"><svg><use href="#osnap3"/></svg></button>
    <button class="s" aria-label="对象追踪"><svg><use href="#otrack"/></svg></button>
    <button class="s" aria-label="动态UCS"><svg><use href="#ducs"/></svg></button>
    <button class="s on" aria-label="动态输入"><svg><use href="#dyn"/></svg></button>
    <button class="s" aria-label="线宽"><svg><use href="#lwt"/></svg></button>
    <button class="s on" aria-label="透明度"><svg><use href="#tpy"/></svg></button>
    <button class="s" aria-label="快捷特性"><svg><use href="#qp"/></svg></button>
    <button class="s" aria-label="选择循环"><svg><use href="#sc"/></svg></button>
    <button class="s" aria-label="注释监视器"><svg><use href="#am"/></svg></button>
  </footer>

  <div class="taskbar">
    <div class="apps">
      <svg viewBox="0 0 28 21"><path d="M1 13l8 6-3 2H1z" fill="#fff"/></svg>
      <svg viewBox="0 0 62 21"><path d="M19 21q1-8 11-8t12 8h-8q-4-3-8 0z" fill="#06c"/></svg>
      <svg viewBox="0 0 62 21"><path d="M15 21l15-8 15 8z" fill="#fff"/></svg>
      <svg viewBox="0 0 62 21"><path d="M16 13h12l3 2h12v6H16z" fill="#fc6"/><path d="M16 18h27v3H16z" fill="#ff9"/></svg>
      <svg viewBox="0 0 62 21"><path d="M20 12l5-2 16 8v3H26z" fill="#6cf"/><path d="M15 21l5-8 14 8z" fill="#9d4"/></svg>
      <svg viewBox="0 0 62 21"><path d="M21 21q3-7 10-7t9 7" fill="none" stroke="#f80" stroke-width="4"/></svg>
      <svg viewBox="0 0 62 21"><path d="M15 10h30v11H15z" fill="#fbb"/><path d="M16 10l11 11h6z" fill="#d55"/><path d="M30 12l6 9H25z" fill="#c22"/><path d="M36 10h9v9z" fill="#fff"/></svg>
      <svg class="active" viewBox="0 0 62 21"><path d="M15 17h21v4H15z" fill="#0ff"/><path d="M37 12h7v9h-7z" fill="#fff"/><path d="M38 11h6v3h-6z" fill="#0cc"/><path d="M15 17h3v4M23 19h3v2" stroke="#000"/></svg>
    </div>
    <div class="tray">
      <svg viewBox="0 0 480 21"><path d="M253 0h78v10q-8 6-25 2l-46 0q-8-2-7-12z" fill="#030"/><path d="M266 0h38l-4 12-18 3z" fill="#333"/><path d="M1 13h269v8H1z" fill="#fff"/><path d="M-34 18v3M-31 20v1M-25 18v3M-20 19v2M-13 18v3" stroke="#ccc"/><path d="M253 13v8" stroke="#bbb"/><path d="M289 16h8v5h-8z" fill="#ddd"/><path d="M328 21q10-8 18 0z" fill="#9c6"/><path d="M329 20q9-7 17 0" fill="none" stroke="#ccc" stroke-width="2"/><path d="M358 21v-3l10-2 9 2v3z" fill="#fff"/><path d="M390 20h18" stroke="#999" stroke-width="2" stroke-dasharray="2 2"/><path d="M425 21q6-8 12 0z" fill="#f60"/><path d="M449 21v-4l3-1h14l2 2v3z" fill="#48f"/><path d="M452 21q6-5 13 0" fill="none" stroke="#adf"/></svg>
    </div>
  </div>
</div>
</body>
</html>
```
FILE: styles.css
```css
* { box-sizing: border-box; }
body { margin: 0; background: #000; font: 15px "Noto Sans", "Noto Sans CJK SC", sans-serif; overflow: hidden; }
button, input, select, textarea { font: inherit; margin: 0; padding: 0; border: 0; border-radius: 0; background: none; color: inherit; }
select { appearance: none; min-width: 0; outline: 0; }
i { font-style: normal; flex: none; }
p, h1, h2 { margin: 0; font-weight: 400; }
.defs { position: absolute; width: 0; height: 0; }
.app { display: flex; flex-direction: column; height: 100vh; padding: 1px 1px 0; overflow: hidden; }

/* title bar */
.titlebar { display: flex; flex: none; height: 41px; padding-top: 10px; background: linear-gradient(90deg, transparent 168px, #cc6 168px 244px, transparent 244px) 0 1px / 100% 1px no-repeat, linear-gradient(#fff 1px, #999 1px 2px, #fff 2px); border-bottom: 1px solid #333; }
.quick { display: flex; align-items: center; width: 502px; margin-left: -1px; background: #999; flex: none; overflow: hidden; }
.q { width: 30px; height: 30px; flex: none; display: grid; place-items: center; }
.quick .q:first-child { margin-left: -13px; }
.q svg { width: 20px; height: 20px; }
.drop { width: 14px; height: 20px; flex: none; display: grid; place-items: center; fill: #333; }
.drop svg { width: 7px; height: 7px; }
.drop.pale { width: 12px; fill: #888; }
.drop.last { margin: 0 1px 0 2px; }
.workspace { display: flex; align-items: center; gap: 2px; width: 225px; height: 28px; flex: none; border: 1px solid #666; padding: 0 4px; background: linear-gradient(#fff 0 7px, #ccc 7px); font-size: 16px; }
.workspace select { flex: 1; }
.gear { width: 20px; height: 20px; flex: none; }
.arrow { width: 10px; height: 10px; fill: #333; }
.more { width: 18px; height: 30px; border-left: 1px solid #fff; flex: none; display: grid; place-items: center; }
.more svg { width: 10px; height: 8px; }
.titlebar h1 { flex: 1; display: flex; justify-content: center; gap: 24px; font-size: 16px; line-height: 23px; white-space: nowrap; }
.search { display: flex; align-items: center; background: #999; width: 278px; flex: none; gap: 6px; padding-left: 6px; }
.tri { width: 5px; height: 9px; }
.search input { width: 225px; height: 28px; border: 1px solid #666; background: #fff; padding: 0 4px; font-size: 14px; font-style: italic; }
.search input::placeholder { color: #777; }
.find svg { width: 20px; height: 20px; display: block; }

/* menu */
.menu { display: flex; flex: none; gap: 28px; height: 25px; line-height: 25px; background: linear-gradient(#999 0 13px, #666 13px); overflow: hidden; white-space: nowrap; }
.menu a { color: #fff; text-decoration: none; }
.menu a:first-child { margin-left: -5px; }

/* toolbars */
.tools { display: flex; flex: none; background: #666; height: 27px; overflow: hidden; }
.tools.second { height: 28px; }
.tools .bar { display: flex; align-items: stretch; flex: none; height: 24px; background: #fff; border: 1px solid #333; border-left: 0; margin-right: 1px; overflow: hidden; }
.bar.cut > :first-child { margin-left: -6px; }
.tools .bar.rest { flex: 1 0 0; margin-right: 0; border-right: 0; }
.t { width: 23px; flex: none; display: grid; place-items: center; }
.t svg { width: 17px; height: 17px; }
.sep { width: 6px; background: linear-gradient(90deg, #fff 2px, #888 2px 3px, #fff 3px); }
.grip { width: 9px; border: solid #666; border-width: 3px 2px 3px 3px; background: linear-gradient(90deg, transparent 1px, #666 1px 3px, transparent 3px), repeating-linear-gradient(#111 0 1px, #666 1px 2px); }
.combo { display: flex; align-items: center; gap: 2px; background: #ccc; color: #666; padding: 0 6px 0 5px; }
.combo select { flex: 1; }
.combo.in { padding-left: 19px; }
.w120 { width: 120px; }
.chev { width: 10px; height: 10px; flex: none; color: #888; }
.combo.ws { width: 93px; padding-left: 0; color: #000; margin-right: 1px; }
.combo.layer { width: 299px; padding-left: 2px; }
.li { width: 15px; height: 15px; flex: none; }
.swatch { width: 11px; height: 11px; border: 1px solid #000; background: #fff; margin-right: 2px; }
.mono { font-family: "Liberation Mono", monospace; font-size: 14px; }
.combo.color { width: 149px; }
.combo.color .swatch { margin-right: 0; }
.combo.ltype { width: 160px; }
.combo.lwt { width: 125px; }
.combo.plot { width: 119px; padding-left: 9px; }
.line { width: 60px; height: 1px; background: #000; margin-right: 2px; }
.block { width: 35px; height: 10px; background: #000; margin-right: 2px; }

/* drawing area */
.canvas { position: relative; flex: 1; min-height: 0; background: #333; border-top: 1px solid #999; }
.vstyle { position: absolute; left: -1px; top: 5px; font-size: 12px; font-weight: 700; line-height: 19px; color: #000b12; }
.axis-y { position: absolute; left: 407px; top: 0; width: 1px; height: 60px; background: #363; }
.axis-x { position: absolute; left: 700px; right: 0; top: 314px; height: 1px; background: #633; }
.cursor { position: absolute; left: 320px; top: 227px; width: 16px; height: 26px; }

.dialog { position: absolute; left: 126px; top: 51px; width: 800px; background: #fff; font-family: "Noto Sans CJK SC", sans-serif; font-size: 15px; line-height: 16px; color: #000; padding: 0 8px 8px; }
.m, .dialog input, .dialog select { font-family: "Liberation Mono", "Noto Sans CJK SC", monospace; font-size: 13px; line-height: 1; }
.dhead { display: flex; justify-content: space-between; align-items: center; height: 34px; margin-left: -5px; padding: 0 6px 4px 0; }
.dhead h2 { font-family: "Noto Sans", "Noto Sans CJK SC", sans-serif; font-size: 15px; color: #999; }
.dhead h2 span { font-size: 16px; }
.close svg { width: 14px; height: 14px; display: block; }
.dbody { display: flex; gap: 8px; }
.left { width: 272px; flex: none; display: flex; flex-direction: column; gap: 5px; }
fieldset { margin: 0; padding: 0; border: 1px solid #ccc; min-width: 0; }
legend { padding: 0 2px; margin-left: 6px; line-height: 15px; }
.types { display: grid; grid-template-columns: 54px 66px 54px 1fr; padding: 5px 0 0 28px; height: 35px; align-items: center; }
.views { display: grid; grid-template-columns: 87px 87px 1fr; padding: 3px 0 0 8px; height: 30px; align-items: center; }
.types label, .views label { display: flex; align-items: center; gap: 3px; }
.views label { gap: 5px; }
.dialog input[type=radio], .dialog input[type=checkbox] { appearance: none; width: 16px; height: 16px; border: 1px solid #333; background: #fff; flex: none; }
.dialog input[type=radio] { border-radius: 50%; }
.dialog input[type=radio]:checked { background: radial-gradient(circle, #333 5px, #fff 6px); }
.dialog input[type=checkbox]:checked::after { content: ""; display: block; width: 10px; height: 5px; margin: 3px 2px; border: solid #333; border-width: 0 0 1px 1px; transform: rotate(-45deg); }
.params { border: 1px solid #ccc; margin-top: 7px; padding: 18px 8px 4px; display: flex; flex-direction: column; gap: 6px; }
.row { display: flex; align-items: center; gap: 8px; }
.row label { flex: 1; }
.row input { width: 96px; height: 22px; border: 1px solid #666; padding: 0 1px; flex: none; }
.row input.short { width: 56px; }
.pick { display: flex; align-items: center; width: 101px; height: 23px; flex: none; border: 1px solid #3c8fc9; background: #cff; padding: 0 5px 0 3px; }
.pick.wide { width: 157px; }
.pick select { flex: 1; }
.pick .chev { color: #333; }
.notes { margin-top: -3px; }
.lines { padding: 5px 8px 2px; }
.lines p { line-height: 21px; height: 21px; white-space: nowrap; }
.middle { width: 176px; flex: none; display: flex; flex-direction: column; padding: 23px 0 4px; }
.middle textarea { flex: 1; resize: none; border: 1px solid #666; padding: 0 2px; line-height: 16px; overflow: hidden; outline: 0; display: block; }
.preview { width: 320px; height: 390px; background: #333; flex: none; shape-rendering: crispEdges; }
.dim { font: 11px "Liberation Sans", sans-serif; fill: #ff0; }
.dim.big { font-size: 14px; }
.dfoot { display: flex; gap: 10px; padding: 7px 0 0 321px; }
.dfoot button { width: 66px; height: 25px; background: #ccc; border: 1px solid #999; }
.dfoot .primary { border: 2px solid #06c; }

/* layout tabs */
.tabs { display: flex; flex: none; height: 26px; background: #fff; border-top: 1px solid #666; border-bottom: 5px solid #666; box-shadow: inset 0 -1px #fff, inset 0 -2px #ccc; }
.tabs svg, .tabs .tab, .tabs .nav { height: 18px; flex: none; display: block; }
.nav { width: 13px; }
.nav svg { width: 14px; }
.slant { width: 8px; fill: none; }
.tab { line-height: 17px; padding: 0 8px 0 6px; border-bottom: 1px solid #666; }
.tab.on { background: #333; color: #fff; }
.hscroll { flex: 1; display: flex; align-items: center; gap: 9px; justify-content: flex-end; padding-right: 167px; height: 18px; }
.tabs .hscroll svg { width: 6px; height: 8px; }
.thumb { width: 6px; height: 17px; background: #bbb; }

/* command window */
.console { flex: none; background: #ccc; padding: 22px 4px 2px; font: 18px "DejaVu Sans Mono", monospace; color: #000; }
.console p { line-height: 23px; height: 23px; white-space: nowrap; }
.console b { font: 300 20px/16px "Noto Sans CJK SC", sans-serif; }
.prompt { flex: none; height: 28px; background: #fff; border-top: 1px solid #666; overflow: hidden; }
.prompt input { width: 100%; height: 24px; margin-left: -14px; display: block; font: italic 300 20px "Noto Sans CJK SC", sans-serif; }
.prompt input::placeholder { color: #999; }

/* status bar */
.status { display: flex; flex: none; height: 27px; background: #999; border-top: 1px solid #111; border-bottom: 5px solid #ccc; box-shadow: inset 0 -4px #666; }
.status output { display: flex; gap: 16px; width: 192px; padding-left: 18px; line-height: 21px; background: #999; font-family: "Liberation Mono", monospace; font-size: 13px; }
.s { width: 22px; height: 21px; flex: none; border-right: 1px solid #666; background: linear-gradient(#ccc 0 12px, #c5c5ee 12px 13px, #aaa 13px); display: grid; place-items: center; }
.s.on { background: linear-gradient(#cff 0 12px, #9cc 12px); }
.s svg { width: 16px; height: 16px; }

.taskbar { display: flex; justify-content: space-between; flex: none; height: 25px; border-top: 4px solid #fff; background: #000; border-bottom: 1px solid #000; }
.apps { display: flex; margin-left: -1px; overflow: hidden; }
.apps svg { width: 62px; height: 21px; display: block; flex: none; }
.apps svg:first-child { width: 28px; }
.apps .active { background: #333; }
.tray svg { width: 480px; height: 21px; display: block; overflow: visible; }
```
